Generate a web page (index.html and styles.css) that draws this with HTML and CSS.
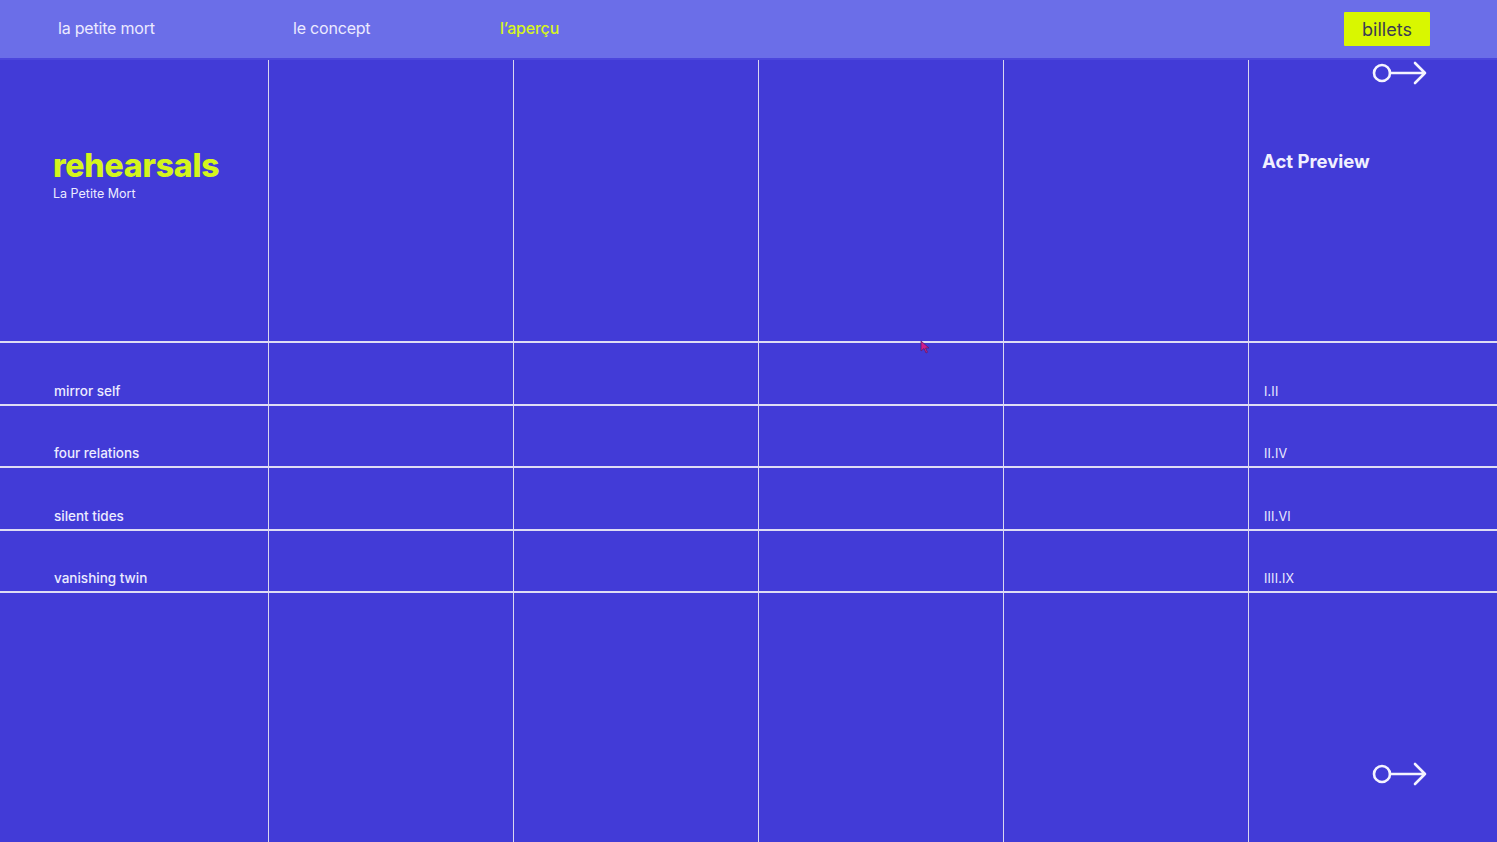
FILE: index.html
```html
<!DOCTYPE html>
<html lang="fr">
<head>
    <meta charset="UTF-8">
    <meta name="viewport" content="width=device-width, initial-scale=1.0">
    <title>rehearsals - La Petite Mort</title>
    <link rel="stylesheet" href="styles.css">
</head>
<body>

    <!-- Top navigation -->
    <header class="nav">
        <a class="nav-link home" href="#">la petite mort</a>
        <a class="nav-link concept" href="#">le concept</a>
        <a class="nav-link current" href="#">l’aperçu</a>
        <a class="tickets" href="#">billets</a>
    </header>

    <main class="board">
        <!-- Title band -->
        <section class="band band-top">
            <div class="cell title-cell">
                <h1>rehearsals</h1>
                <p class="subtitle">La Petite Mort</p>
            </div>
            <div class="cell"></div>
            <div class="cell"></div>
            <div class="cell"></div>
            <div class="cell"></div>
            <div class="cell side-cell">
                <svg class="arrow" viewBox="0 0 56 24" width="56" height="24">
                    <circle cx="10" cy="12" r="8" />
                    <path d="M18 12 H53 M43 2 L53 12 L43 22" />
                </svg>
                <h2>Act Preview</h2>
            </div>
        </section>

        <!-- Acts -->
        <section class="band row">
            <div class="cell label">mirror self</div>
            <div class="cell"></div><div class="cell"></div><div class="cell"></div><div class="cell"></div>
            <div class="cell numeral">I.II</div>
        </section>
        <section class="band row">
            <div class="cell label">four relations</div>
            <div class="cell"></div><div class="cell"></div><div class="cell"></div><div class="cell"></div>
            <div class="cell numeral">II.IV</div>
        </section>
        <section class="band row">
            <div class="cell label">silent tides</div>
            <div class="cell"></div><div class="cell"></div><div class="cell"></div><div class="cell"></div>
            <div class="cell numeral">III.VI</div>
        </section>
        <section class="band row">
            <div class="cell label">vanishing twin</div>
            <div class="cell"></div><div class="cell"></div><div class="cell"></div><div class="cell"></div>
            <div class="cell numeral">IIII.IX</div>
        </section>

        <!-- Bottom band -->
        <section class="band band-bottom">
            <div class="cell"></div>
            <div class="cell"></div>
            <div class="cell"></div>
            <div class="cell"></div>
            <div class="cell"></div>
            <div class="cell bottom-cell">
                <svg class="arrow" viewBox="0 0 56 24" width="56" height="24">
                    <circle cx="10" cy="12" r="8" />
                    <path d="M18 12 H53 M43 2 L53 12 L43 22" />
                </svg>
            </div>
        </section>

        <!-- mouse pointer caught in the shot -->
        <svg class="pointer" viewBox="0 0 10 14" width="10" height="14">
            <path d="M1 1 L1 11 L4 8.5 L6 13 L7.5 12.3 L5.6 8 L9 8 Z" />
        </svg>
    </main>

</body>
</html>
```

FILE: styles.css
```css
* {
    box-sizing: border-box;
}

body {
    margin: 0;
    background: #423bd7;
    font-family: Inter, "Open Sans", sans-serif;
    color: #ecebff;
    height: 842px;
    overflow: hidden;
}

/* Navigation */
.nav {
    height: 60px;
    background: #6b6ee8;
    border-bottom: 2px solid #4b46dc;
    display: flex;
    align-items: center;
    padding: 0 67px 0 58px;
}

.nav-link {
    color: #eceaff;
    text-decoration: none;
    font-size: 16px;
    letter-spacing: -0.2px;
    margin-top: -3px;
}

.nav-link.home {
    width: 235px;
}

.nav-link.concept {
    width: 207px;
}

.nav-link.current {
    color: #d6f51f;
    font-weight: 500;
}

.tickets {
    margin-left: auto;
    background: #d9f700;
    color: #3b3b55;
    text-decoration: none;
    font-size: 18px;
    width: 86px;
    height: 34px;
    line-height: 35px;
    text-align: center;
    border-radius: 1px;
}

/* Board grid */
.board {
    position: relative;
}

.band {
    display: grid;
    grid-template-columns: 268px repeat(4, 245px) 1fr;
}

.band-top {
    height: 281px;
}

.row {
    height: 62.5px;
    border-top: 2px solid #dedcf4;
}

.band-bottom {
    height: 252px;
    border-top: 2px solid #dedcf4;
}

.cell + .cell {
    border-left: 1px solid #d9d7f0;
}

/* Title */
.title-cell {
    padding: 88px 0 0 53px;
}

h1 {
    margin: 0;
    color: #d4f51c;
    font-size: 32px;
    font-weight: 800;
    letter-spacing: -0.2px;
    line-height: 36px;
}

.subtitle {
    margin: 2px 0 0;
    font-size: 12.5px;
    line-height: 16px;
}

.side-cell {
    padding: 0 0 0 13px;
    display: flex;
    flex-direction: column;
}

.arrow {
    fill: none;
    stroke: #f4f3ff;
    stroke-width: 2.6;
    stroke-linecap: round;
    stroke-linejoin: round;
    align-self: flex-end;
    margin-right: 69px;
}

.side-cell .arrow {
    margin-top: 1px;
}

h2 {
    margin: 65px 0 0;
    font-size: 18.5px;
    font-weight: 700;
    color: #f1f0ff;
}

.bottom-cell {
    display: flex;
    flex-direction: column;
    padding-top: 169px;
}

/* Acts */
.label {
    padding: 0 0 5px 54px;
    display: flex;
    align-items: flex-end;
    font-size: 13.5px;
    font-weight: 500;
}

.numeral {
    padding: 0 0 5px 15px;
    display: flex;
    align-items: flex-end;
    font-size: 12.5px;
    letter-spacing: 0.2px;
}

.pointer {
    position: absolute;
    left: 920px;
    top: 280px;
    fill: #d21b8c;
    stroke: #5a2070;
    stroke-width: 0.8;
}
```
